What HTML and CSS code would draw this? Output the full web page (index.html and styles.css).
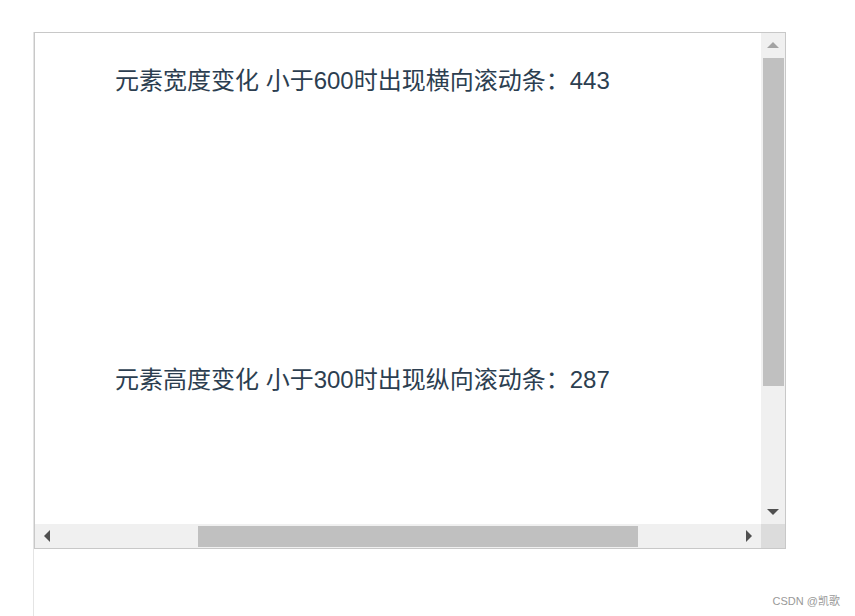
FILE: index.html
```html
<!DOCTYPE html>
<html lang="zh-CN">
<head>
    <meta charset="UTF-8">
    <meta name="viewport" content="width=device-width, initial-scale=1.0">
    <title>元素尺寸变化</title>
    <link rel="stylesheet" href="styles.css">
</head>
<body>

    <!-- Page column -->
    <div class="page">
        <div class="frame">
            <!-- Scroll content -->
            <div class="view">
                <div class="row">元素宽度变化 小于600时出现横向滚动条：443</div>
                <div class="row">元素高度变化 小于300时出现纵向滚动条：287</div>
            </div>

            <!-- Vertical scrollbar -->
            <div class="vbar">
                <div class="btn"><span class="arrow up"></span></div>
                <div class="vtrack"><div class="vthumb"></div></div>
                <div class="btn"><span class="arrow down"></span></div>
            </div>

            <!-- Horizontal scrollbar -->
            <div class="hbar">
                <div class="btn"><span class="arrow left"></span></div>
                <div class="htrack"><div class="hthumb"></div></div>
                <div class="btn"><span class="arrow right"></span></div>
            </div>
            <div class="corner"></div>
        </div>
    </div>

    <div class="mark">CSDN @凯歌</div>

</body>
</html>
```

FILE: styles.css
```css
body {
    margin: 0;
    font-family: "Liberation Sans", "Noto Sans CJK SC", sans-serif;
    background-color: #fff;
    height: 616px;
    overflow: hidden;
}
.page {
    margin: 32px 0 0 33px;
    border-left: 1px solid #e4e4e4;
    height: 584px;
}
.frame {
    width: 750px;
    height: 515px;
    border: 1px solid #c8c8c8;
    display: grid;
    grid-template-columns: 726px 24px;
    grid-template-rows: 491px 24px;
}
.view {
    padding: 32px 0 0 80px;
    color: #2c3e50;
    font-size: 24px;
    overflow: hidden;
}
.row {
    line-height: 32px;
    height: 299px;
    white-space: nowrap;
}
/* Fake scrollbars */
.vbar {
    background-color: #f0f0f0;
    display: flex;
    flex-direction: column;
}
.hbar {
    background-color: #f0f0f0;
    display: flex;
}
.corner {
    background-color: #dcdcdc;
}
.btn {
    width: 24px;
    height: 24px;
    flex-shrink: 0;
    display: flex;
    align-items: center;
    justify-content: center;
}
.vtrack {
    flex-grow: 1;
    padding: 1px 1px 0 2px;
}
.vthumb {
    height: 328px;
    background-color: #c0c0c0;
}
.htrack {
    flex-grow: 1;
    padding: 2px 0 1px 139px;
}
.hthumb {
    width: 440px;
    height: 100%;
    background-color: #c0c0c0;
}
.arrow {
    width: 0;
    height: 0;
    border: 6px solid transparent;
}
.arrow.up {
    border-bottom: 6px solid #a3a3a3;
    border-top-width: 0;
    margin-top: -1px;
}
.arrow.down {
    border-top: 6px solid #505050;
    border-bottom-width: 0;
}
.arrow.left {
    border-right: 6px solid #505050;
    border-left-width: 0;
}
.arrow.right {
    border-left: 6px solid #505050;
    border-right-width: 0;
}
.mark {
    position: absolute;
    right: 15px;
    bottom: 8px;
    font-size: 11px;
    color: #999;
}
```
